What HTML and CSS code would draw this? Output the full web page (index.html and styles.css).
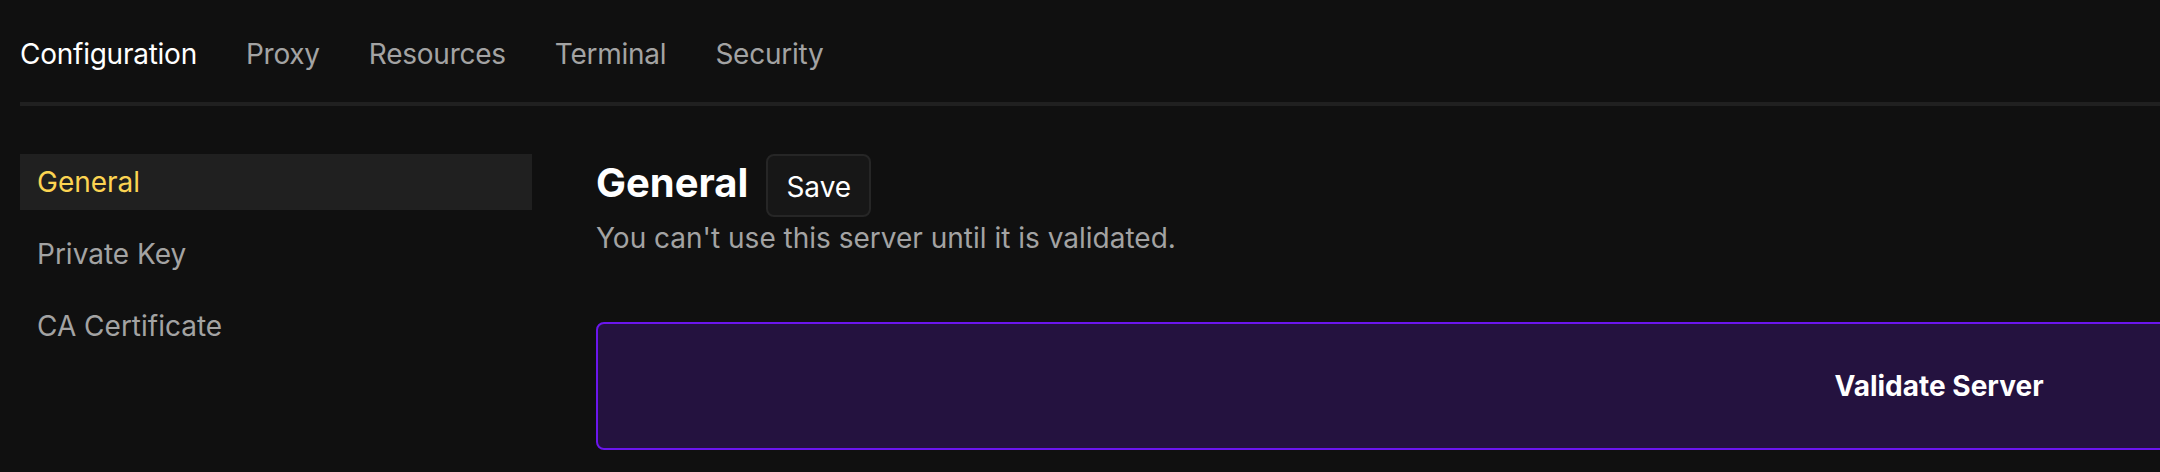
FILE: index.html
```html
<!DOCTYPE html>
<html lang="en">
<head>
<meta charset="utf-8">
<title>Server Configuration</title>
<link rel="stylesheet" href="styles.css">
</head>
<body>
<div class="page">
  <nav class="tabs">
    <a class="tab active">Configuration</a>
    <a class="tab">Proxy</a>
    <a class="tab">Resources</a>
    <a class="tab">Terminal</a>
    <a class="tab">Security</a>
  </nav>
  <div class="content">
    <aside class="sidebar">
      <a class="side-item active">General</a>
      <a class="side-item">Private Key</a>
      <a class="side-item">CA Certificate</a>
    </aside>
    <main class="main">
      <div class="title-row">
        <h2 class="title">General</h2>
        <button class="btn">Save</button>
      </div>
      <p class="subtitle">You can't use this server until it is validated.</p>
      <button class="validate">Validate Server</button>
    </main>
  </div>
</div>
</body>
</html>
```
FILE: styles.css
```css
html, body {
  margin: 0;
  padding: 0;
  background: #101010;
  overflow: hidden;
}
body {
  font-family: Inter, "Noto Sans", sans-serif;
  color: #ffffff;
}
.page {
  width: 3262px;
  padding-left: 20px;
}
.tabs {
  display: flex;
  gap: 49px;
  padding-top: 33px;
  padding-bottom: 27px;
  border-bottom: 4px solid #202020;
}
.tab {
  font-size: 28px;
  line-height: 42px;
  letter-spacing: -0.25px;
  color: #a3a3a3;
  cursor: pointer;
}
.tab.active {
  color: #ffffff;
}
.content {
  display: flex;
  gap: 64px;
  margin-top: 48px;
}
.sidebar {
  width: 512px;
  flex: none;
  display: flex;
  flex-direction: column;
  gap: 16px;
}
.side-item {
  font-size: 28px;
  line-height: 42px;
  padding: 7px 17px;
  color: #a3a3a3;
  cursor: pointer;
}
.side-item.active {
  background: #202020;
  color: #fcd452;
}
.main {
  flex: 1;
  display: flex;
  flex-direction: column;
  align-items: stretch;
}
.title-row {
  display: flex;
  align-items: baseline;
  gap: 18px;
}
.title {
  margin: 0;
  font-size: 40px;
  line-height: 48px;
  font-weight: 700;
}
.btn {
  font-family: inherit;
  font-size: 28px;
  line-height: 38px;
  color: #ffffff;
  background: #171717;
  border: 2px solid #262626;
  border-radius: 8px;
  padding: 12px 18px 9px;
}
.subtitle {
  margin: 0;
  font-size: 28px;
  line-height: 42px;
  color: #a3a3a3;
}
.validate {
  margin-top: 63px;
  height: 128px;
  font-family: inherit;
  font-size: 28px;
  line-height: 34px;
  font-weight: 700;
  color: #ffffff;
  background: #24123f;
  border: 2px solid #6b16ed;
  border-radius: 8px;
}
```
